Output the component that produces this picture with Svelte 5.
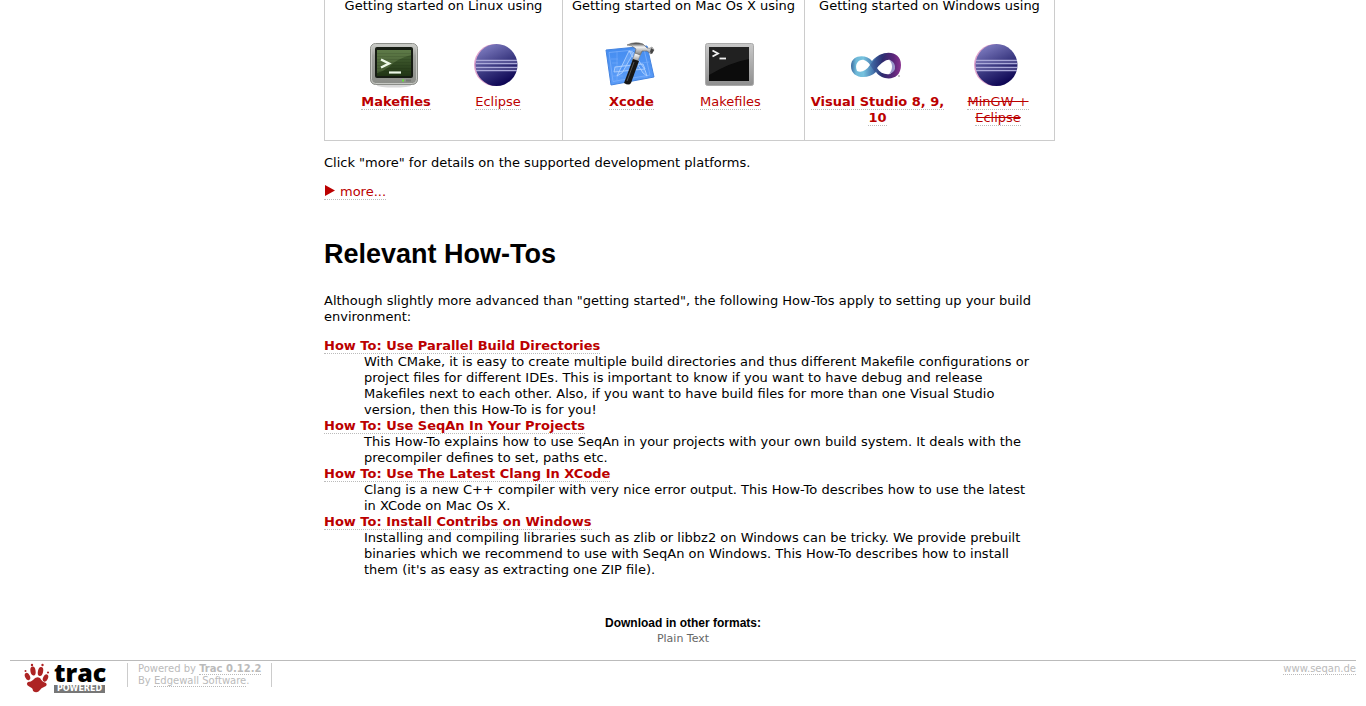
<script>
  const platforms = [
    {
      id: 'linux', title: 'Getting started on Linux using',
      tools: [{ icon: 'crt', label: 'Makefiles', main: true }, { icon: 'eclipse', label: 'Eclipse' }]
    },
    {
      id: 'mac', title: 'Getting started on Mac Os X using',
      tools: [{ icon: 'xcode', label: 'Xcode', main: true }, { icon: 'terminal', label: 'Makefiles' }]
    },
    {
      id: 'windows', title: 'Getting started on Windows using',
      tools: [{ icon: 'vs', label: 'Visual Studio 8, 9, 10', main: true }, { icon: 'eclipse', label: 'MinGW + Eclipse', gone: true }]
    }
  ];

  const howtos = [
    {
      title: 'How To: Use Parallel Build Directories',
      text: 'With CMake, it is easy to create multiple build directories and thus different Makefile configurations or project files for different IDEs. This is important to know if you want to have debug and release Makefiles next to each other. Also, if you want to have build files for more than one Visual Studio version, then this How-To is for you!'
    },
    {
      title: 'How To: Use SeqAn In Your Projects',
      text: 'This How-To explains how to use SeqAn in your projects with your own build system. It deals with the precompiler defines to set, paths etc.'
    },
    {
      title: 'How To: Use The Latest Clang In XCode',
      text: 'Clang is a new C++ compiler with very nice error output. This How-To describes how to use the latest in XCode on Mac Os X.'
    },
    {
      title: 'How To: Install Contribs on Windows',
      text: "Installing and compiling libraries such as zlib or libbz2 on Windows can be tricky. We provide prebuilt binaries which we recommend to use with SeqAn on Windows. This How-To describes how to install them (it's as easy as extracting one ZIP file)."
    }
  ];
</script>

<svg class="defs" width="0" height="0" aria-hidden="true">
  <defs>
    <linearGradient id="ball" x1="0.2" y1="0" x2="0.7" y2="1"><stop offset="0" stop-color="#8280c4" /><stop offset="0.5" stop-color="#3f3d85" /><stop offset="1" stop-color="#08004f" /></linearGradient>
    <linearGradient id="case" x1="0" y1="0" x2="0" y2="1"><stop offset="0" stop-color="#d0d1cd" /><stop offset="0.3" stop-color="#a1a39e" /><stop offset="1" stop-color="#8b8d88" /></linearGradient>
    <linearGradient id="screen" x1="0" y1="0" x2="0" y2="1"><stop offset="0" stop-color="#4b6838" /><stop offset="1" stop-color="#203414" /></linearGradient>
    <linearGradient id="metal" x1="0" y1="0" x2="0" y2="1"><stop offset="0" stop-color="#c9c9c9" /><stop offset="1" stop-color="#8f8f8f" /></linearGradient>
    <linearGradient id="blue" x1="0" y1="0" x2="0" y2="1"><stop offset="0" stop-color="#438cf0" /><stop offset="1" stop-color="#5c9df8" /></linearGradient>
    <linearGradient id="chrome" x1="0" y1="0" x2="0" y2="1"><stop offset="0" stop-color="#333" /><stop offset="0.35" stop-color="#f4f4f4" /><stop offset="1" stop-color="#777" /></linearGradient>
    <linearGradient id="ribbon" x1="0" y1="0" x2="1" y2="0"><stop offset="0" stop-color="#3c6a9f" /><stop offset="0.1" stop-color="#6fb9d8" /><stop offset="0.25" stop-color="#76c2de" /><stop offset="0.45" stop-color="#4575ad" /><stop offset="0.62" stop-color="#2c2b6d" /><stop offset="0.85" stop-color="#5a2679" /><stop offset="1" stop-color="#8a3390" /></linearGradient>
  </defs>
</svg>

{#snippet icon(name)}
  <svg class="icon" width="50" height="46" viewBox="0 0 50 46" aria-hidden="true">
    {#if name === 'crt'}
      <ellipse cx="25" cy="43.500" rx="17" ry="2" fill="#d8d8d8" />
      <rect x="1.500" y="1.500" width="47" height="41" rx="5" fill="url(#case)" stroke="#8b8d88" />
      <rect x="2.500" y="2.500" width="45" height="39" rx="4" fill="none" stroke="#c6c8c3" />
      <rect x="6" y="5" width="38" height="31" rx="2" fill="#161c13" />
      <rect x="8" y="8" width="34" height="26" fill="url(#screen)" />
      <path d="M8 8H42V13Q27 17 20 25Q15 29 8 31Z" fill="#8aa66e" opacity="0.3" />
      <path d="M8 11.500H42M8 14.500H42M8 17.500H42M8 20.500H42M8 23.500H42M8 26.500H42M8 29.500H42" stroke="#14210d" opacity="0.12" />
      <path d="M12 17.500L20 21.500L12 25.500" fill="none" stroke="#edf9e8" stroke-width="2.400" />
      <path d="M20 30.500H32" stroke="#edf9e8" stroke-width="2.200" />
      <rect x="33" y="37.500" width="2" height="2" fill="#67e336" /><path d="M37 38.500H42" stroke="#777974" stroke-width="2" />
    {:else if name === 'eclipse'}
      <circle cx="24" cy="23" r="21" fill="#e0a3cc" />
      <circle cx="25.500" cy="23" r="21" fill="url(#ball)" />
      <path d="M5 18.500H46M5 21.500H46M5 25.500H46M5 28.500H46" stroke="#aaa9d8" stroke-width="1.300" />
    {:else if name === 'xcode'}
      <path d="M1 8L42 4L49 35L6 43Z" fill="url(#blue)" stroke="#4584e0" />
      <path d="M4 10.500L39 7L45 33L8 39.500Z" fill="none" stroke="#8dbbff" stroke-width="0.600" />
      <path d="M6 17H13M7 21H13M8 34H18M12 9V38M9 25L44 20M35 35H43" fill="none" stroke="#75adfb" stroke-width="0.600" />
      <path d="M24 9L12 34L17 31L28 12ZM24 9L38 31L42 34L40 28L28 10ZM10 25L38 22L40 27L9 30Z" fill="#93bfff" fill-opacity="0.3" stroke="#b5d4ff" stroke-width="0.800" />
      <path d="M31 8L37 9L32 21L27 19Z" fill="url(#chrome)" stroke="#777" stroke-width="0.500" />
      <path d="M28 17L34 19L26 41Q24 44 19 41Z" fill="#171717" />
      <path d="M29 20L22 39" stroke="#555" stroke-width="1" />
      <path d="M22 3Q30-1 38 2L42 6Q45 7 47 5L49 8L46 12L42 9L37 9L35 13L30 11L31 7Q27 3 22 3Z" fill="url(#chrome)" stroke="#666" stroke-width="0.600" />
      <path d="M46 6L49 8L47 12L45 10Z" fill="#444" />
    {:else if name === 'terminal'}
      <rect x="1.500" y="1.500" width="48" height="42" rx="2" fill="url(#metal)" stroke="#aaa" />
      <rect x="5" y="5" width="40" height="34" fill="#0c0c0c" />
      <path d="M5 5H45V17Q27 20 5 33Z" fill="#303030" opacity="0.6" />
      <path d="M8.500 8.500L14 11.500L8.500 14.500" fill="none" stroke="#f0f0f0" stroke-width="1.800" />
      <path d="M15.500 16.500H22" stroke="#f0f0f0" stroke-width="1.800" />
    {:else}
      <path fill-rule="evenodd" fill="url(#ribbon)" d="M21 19C16 12 0 12 0 24C0 37 17 38 25 30C31 39 50 40 50 23C50 8 31 7 21 19ZM6 29C3 22 8 17 13 18C16 19 18 21 19 23C15 29 10 31 6 29ZM26 26C31 20 36 17 39 18C43 22 43 29 39 32C34 33 29 31 26 26Z" />
      <path d="M38 18C42 21 42 28 38 32Q45 30 44 24Q43 19 38 18Z" fill="#9997c9" />
      <path d="M19 23C23 18 29 12 36 11C32 15 30 19 26 26L24 30Z" fill="#2c3b80" opacity="0.4" />
      <path d="M47 34H49" stroke="#888" />
    {/if}
  </svg>
{/snippet}

<main>
  <div class="wiki">
    <table class="platforms">
      <tbody>
        <tr>
          {#each platforms as p}
            <td class={p.id}>
              <p class="using">{p.title}</p>
              <div class="tools">
                {#each p.tools as t}
                  <div class="tool">
                    {@render icon(t.icon)}
                    <a href="#{p.id}-{t.icon}" class:main={t.main} class:gone={t.gone}>{t.label}</a>
                  </div>
                {/each}
              </div>
            </td>
          {/each}
        </tr>
      </tbody>
    </table>
    <p>Click "more" for details on the supported development platforms.</p>
    <p><a href="#more"><svg class="arrow" width="16" height="11" viewBox="0 0 16 11" aria-hidden="true"><path d="M1 0L11 5.500L1 11Z" fill="#b00" /></svg>more...</a></p>
    <h1>Relevant How-Tos</h1>
    <p>Although slightly more advanced than "getting started", the following How-Tos apply to setting up your build environment:</p>
    <dl>
      {#each howtos as h}
        <dt><a href="#howto">{h.title}</a></dt>
        <dd>{h.text}</dd>
      {/each}
    </dl>
  </div>
  <section class="formats">
    <h2>Download in other formats:</h2>
    <a href="#txt">Plain Text</a>
  </section>
</main>

<footer>
  <a class="logo" href="#trac" aria-label="trac powered">
    <svg width="26" height="30" viewBox="0 0 26 30" aria-hidden="true">
      <g fill="#ad2323">
        <path d="M9 17Q12 13 16 15Q18 19 22 20Q24 23 20 24Q17 25 16 27Q13 31 9 28Q9 25 6 24Q1 22 4 19Q7 19 9 17Z" />
        <ellipse cx="3.500" cy="13.500" rx="2.400" ry="3.800" transform="rotate(-25 3.500 13.500)" />
        <ellipse cx="9" cy="8" rx="2.600" ry="4.500" transform="rotate(-8 9 8)" />
        <ellipse cx="16.500" cy="8.500" rx="2.600" ry="4.500" transform="rotate(12 16.500 8.500)" />
        <ellipse cx="21.500" cy="15" rx="2.400" ry="3.800" transform="rotate(25 21.500 15)" />
        <circle cx="1.500" cy="8" r="1" /><circle cx="8" cy="2" r="1.200" /><circle cx="18.500" cy="2" r="1.200" /><circle cx="24" cy="9.500" r="1.100" />
      </g>
    </svg>
    <span class="mark"><b>trac</b><small>POWERED</small></span>
  </a>
  <p class="powered">Powered by <a href="#about"><strong>Trac 0.12.2</strong></a><br />By <a href="#edgewall">Edgewall Software</a>.</p>
  <p class="site"><a href="#seqan">www.seqan.de</a></p>
</footer>

<style>
  :global(body) {
    background: #fff;
    color: #000;
    font: 13px/16px Verdana, 'DejaVu Sans', sans-serif;
  }
  .defs { display: block; }
  a { color: #b00; text-decoration: none; border-bottom: 1px dotted #bbb; }
  p { margin: 13px 0; }
  main { padding: 0 0 13px; }
  .wiki { max-width: 730px; margin: 0 auto; padding-left: 12px; }
  .platforms { width: 731px; margin-bottom: 14px; border-collapse: collapse; table-layout: fixed; }
  td { padding: 0; border: 1px solid #ccc; border-top: 0; vertical-align: top; }
  .linux { width: 237px; }
  .mac { width: 241px; }
  .using { margin: 0; line-height: 12px; text-align: center; white-space: nowrap; }
  .tools { display: grid; height: 99px; margin-top: 29px; }
  .linux .tools { grid-template-columns: 102px 102px; padding-left: 20px; }
  .mac .tools { grid-template-columns: 99px 99px; padding-left: 19px; }
  .windows .tools { grid-template-columns: 135px 106px; padding-left: 5px; }
  .tool { text-align: center; }
  .icon { display: block; margin: 1px auto 6px; padding-right: 4px; }
  .main { font-weight: bold; }
  .gone { text-decoration: line-through; }
  .arrow { vertical-align: 0; }
  h1 { margin: 37px 0 22px; font: bold 27px/34px 'Liberation Sans', Arial, sans-serif; }
  dl { margin: 12px 0 0; }
  dt { font-weight: bold; }
  dd { margin: 0 16px 0 40px; }
  .formats { margin-top: 37px; text-align: center; font-size: 11px; }
  .formats h2 { margin: 0; font: bold 12px/16px 'Liberation Sans', Arial, sans-serif; }
  .formats a { color: #666; border: 0; }
  footer { display: flex; align-items: flex-start; margin: 0 10px; padding-top: 2px; border-top: 1px solid #bbb; color: #bbb; font-size: 10px; line-height: 12px; }
  footer p { margin: 0; }
  footer a { color: #bbb; }
  .logo { display: flex; gap: 4px; margin: 0 22px 0 14px; border: 0; }
  .mark { display: flex; flex-direction: column; gap: 3px; width: 51px; }
  .mark b { color: #000; font: 800 25px/19px 'Open Sans', sans-serif; }
  .mark small { background: #777; color: #fff; font: bold 8px/8px 'DejaVu Sans', sans-serif; text-align: center; }
  .powered { padding: 0 10px; border: solid #ccc; border-width: 0 1px; }
  .site { margin-left: auto; }
</style>
